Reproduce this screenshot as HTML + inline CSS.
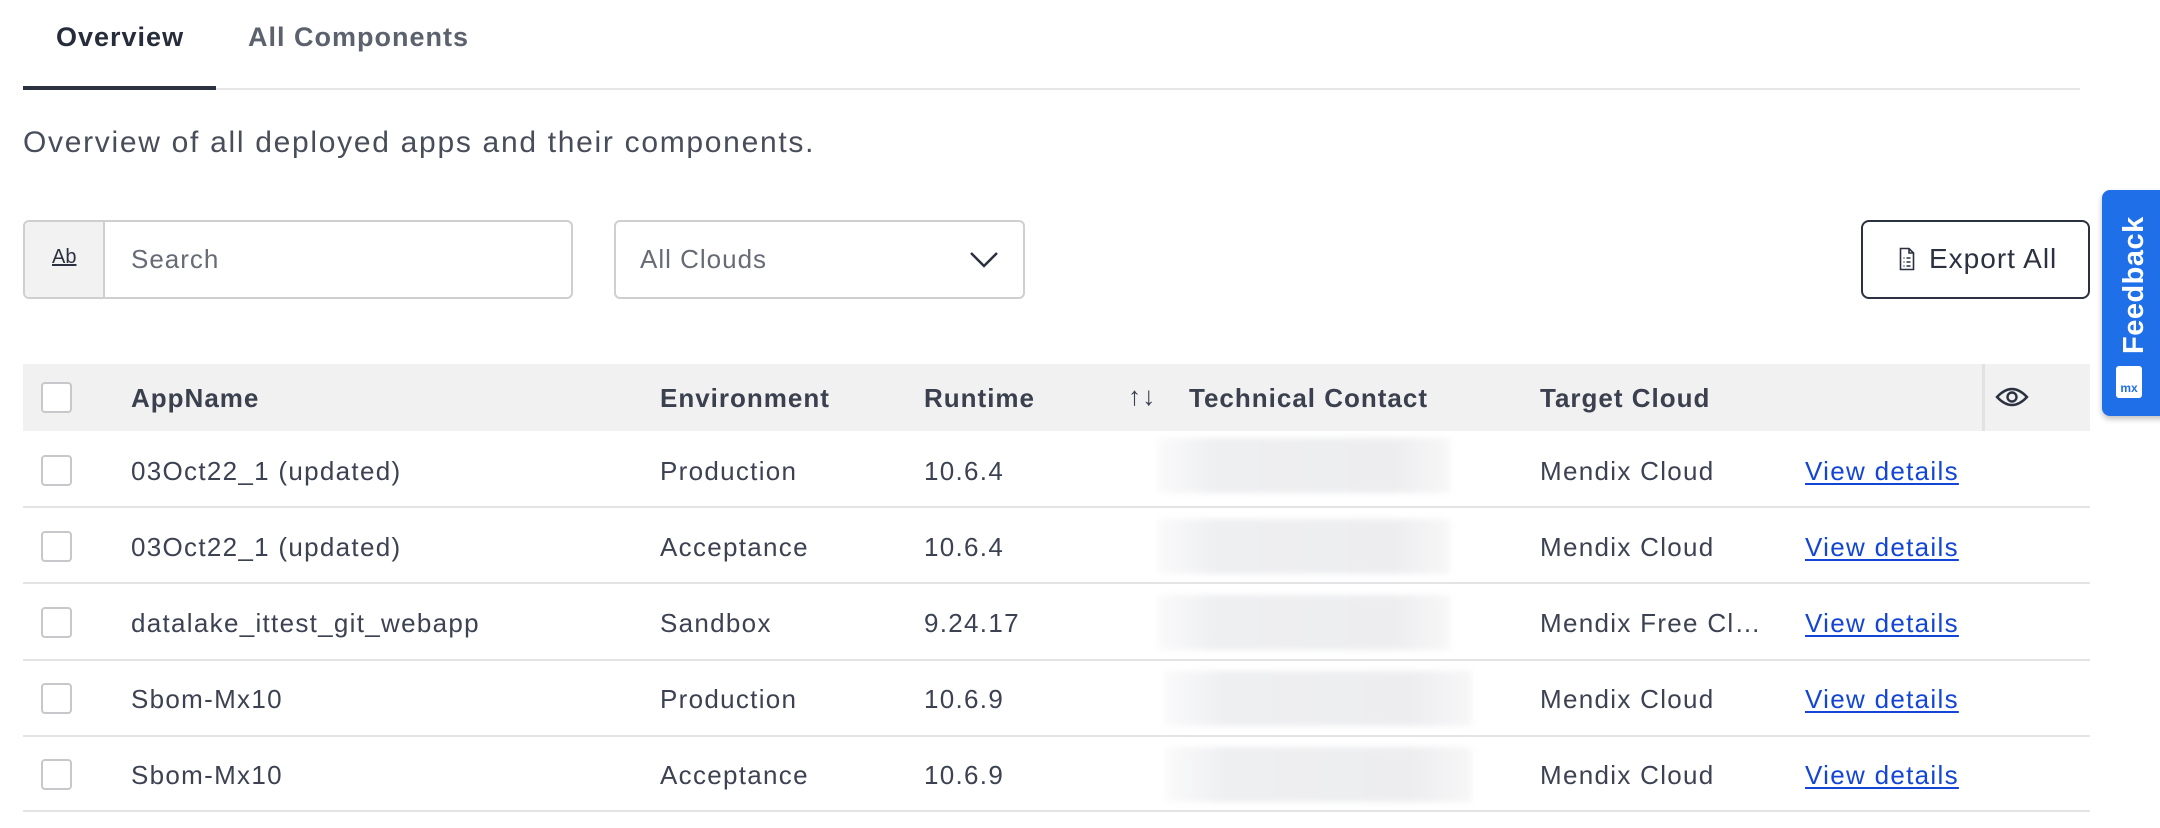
<!DOCTYPE html>
<html><head><meta charset="utf-8"><style>
*{box-sizing:border-box;margin:0;padding:0}
body{width:2160px;height:828px;background:#fff;font-family:"Liberation Sans",sans-serif;color:#3c4252;position:relative;overflow:hidden;letter-spacing:1px}
.a{position:absolute;white-space:nowrap}
.tab{font-size:27px;font-weight:bold;top:22px}
.cell{font-size:26px;line-height:30px;letter-spacing:1.3px}
.hd{font-weight:bold;color:#3a404e;letter-spacing:1px}
.cb{position:absolute;left:41px;width:31px;height:31px;border:2px solid #c8c8cc;border-radius:4px;background:#fff}
.line{position:absolute;left:23px;width:2067px;height:2px;background:#e4e4e6}
.blur{position:absolute;height:55px;background:linear-gradient(90deg,#fafafb,#eeeff1 20%,#ededef 80%,#f7f7f8);filter:blur(3px)}
.lnk{color:#1346d6;text-decoration:underline;text-underline-offset:3px}
</style></head><body>
<div class="a tab" style="left:56px;color:#262c3a">Overview</div>
<div class="a tab" style="left:248px;color:#5b616d">All Components</div>
<div class="a" style="left:23px;top:88px;width:2057px;height:2px;background:#e6e6e8"></div>
<div class="a" style="left:23px;top:86px;width:193px;height:4px;background:#2b3140"></div>
<div class="a" style="left:23px;top:126px;font-size:30px;letter-spacing:1.7px;color:#474d59">Overview of all deployed apps and their components.</div>

<div class="a" style="left:23px;top:220px;width:550px;height:79px;border:2px solid #cfcfd2;border-radius:6px;overflow:hidden">
 <div class="a" style="left:0;top:0;width:80px;height:75px;background:#f2f2f3;border-right:2px solid #cfcfd2"></div>
 <div class="a" style="left:27px;top:24px;font-size:20px;color:#2b3140;text-decoration:underline;letter-spacing:0">Ab</div>
 <div class="a" style="left:106px;top:22px;font-size:26px;color:#666b75">Search</div>
</div>
<div class="a" style="left:614px;top:220px;width:411px;height:79px;border:2px solid #cfcfd2;border-radius:6px">
 <div class="a" style="left:24px;top:22px;font-size:26px;color:#666b75">All Clouds</div>
 <svg class="a" style="left:352px;top:26px" width="32" height="24" viewBox="0 0 32 24"><path d="M3 5 L16 18 L29 5" fill="none" stroke="#2b3140" stroke-width="2.5"/></svg>
</div>
<div class="a" style="left:1861px;top:220px;width:229px;height:79px;border:2px solid #2b3140;border-radius:8px">
 <svg class="a" style="left:36px;top:25px" width="16" height="24" viewBox="0 0 16 24"><path d="M1.5 1.5 H10 L14.5 6 V22.5 H1.5 Z M10 1.5 V6 H14.5 M4.5 11 H5.5 M7.5 11 H11.5 M4.5 15 H5.5 M7.5 15 H11.5 M4.5 19 H5.5 M7.5 19 H11.5" fill="none" stroke="#2b3140" stroke-width="1.6"/></svg>
 <div class="a" style="left:66px;top:21px;font-size:28px;color:#2b3140">Export All</div>
</div>
<div class="a" style="left:2102px;top:190px;width:70px;height:226px;background:#1f6fe9;border-radius:8px 0 0 8px;box-shadow:0 3px 6px rgba(0,0,0,.25)">
 <div class="a" style="left:10px;top:14px;width:44px;height:150px;writing-mode:vertical-rl;transform:rotate(180deg);font-size:29px;font-weight:bold;color:#fff;letter-spacing:0.5px;line-height:44px;text-align:left">Feedback</div>
 <div class="a" style="left:14px;top:176px;width:26px;height:32px;background:#fff;border-radius:3px;font-size:12px;font-weight:bold;color:#1f6fe9;text-align:center;line-height:44px;letter-spacing:0">mx</div>
</div>

<div class="a" style="left:23px;top:364px;width:2067px;height:67px;background:#f1f1f2"></div>
<div class="a" style="left:1982px;top:364px;width:3px;height:67px;background:#e2e2e4"></div>
<div class="cb" style="top:382px"></div>
<div class="a cell hd" style="left:131px;top:383px">AppName</div>
<div class="a cell hd" style="left:660px;top:383px">Environment</div>
<div class="a cell hd" style="left:924px;top:383px">Runtime</div>
<div class="a cell" style="left:1128px;top:381px;color:#3a404e">↑↓</div>
<div class="a cell hd" style="left:1189px;top:383px">Technical Contact</div>
<div class="a cell hd" style="left:1540px;top:383px">Target Cloud</div>
<svg class="a" style="left:1995px;top:385px" width="34" height="24" viewBox="0 0 34 24"><path d="M2 12 Q17 -4 32 12 Q17 28 2 12 Z" fill="none" stroke="#2b3140" stroke-width="2.4"/><circle cx="17" cy="12" r="4.5" fill="none" stroke="#2b3140" stroke-width="2.4"/></svg>

<div class="cb" style="top:455px"></div>
<div class="a cell" style="left:131px;top:456px">03Oct22_1 (updated)</div>
<div class="a cell" style="left:660px;top:456px">Production</div>
<div class="a cell" style="left:924px;top:456px">10.6.4</div>
<div class="blur" style="left:1158px;top:438px;width:292px"></div>
<div class="a cell" style="left:1540px;top:456px">Mendix Cloud</div>
<div class="a cell lnk" style="left:1805px;top:456px">View details</div>
<div class="line" style="top:506px"></div>

<div class="cb" style="top:531px"></div>
<div class="a cell" style="left:131px;top:532px">03Oct22_1 (updated)</div>
<div class="a cell" style="left:660px;top:532px">Acceptance</div>
<div class="a cell" style="left:924px;top:532px">10.6.4</div>
<div class="blur" style="left:1158px;top:519px;width:292px"></div>
<div class="a cell" style="left:1540px;top:532px">Mendix Cloud</div>
<div class="a cell lnk" style="left:1805px;top:532px">View details</div>
<div class="line" style="top:582px"></div>

<div class="cb" style="top:607px"></div>
<div class="a cell" style="left:131px;top:608px">datalake_ittest_git_webapp</div>
<div class="a cell" style="left:660px;top:608px">Sandbox</div>
<div class="a cell" style="left:924px;top:608px">9.24.17</div>
<div class="blur" style="left:1158px;top:595px;width:292px"></div>
<div class="a cell" style="left:1540px;top:608px">Mendix Free Cl…</div>
<div class="a cell lnk" style="left:1805px;top:608px">View details</div>
<div class="line" style="top:659px"></div>

<div class="cb" style="top:683px"></div>
<div class="a cell" style="left:131px;top:684px">Sbom-Mx10</div>
<div class="a cell" style="left:660px;top:684px">Production</div>
<div class="a cell" style="left:924px;top:684px">10.6.9</div>
<div class="blur" style="left:1164px;top:671px;width:308px"></div>
<div class="a cell" style="left:1540px;top:684px">Mendix Cloud</div>
<div class="a cell lnk" style="left:1805px;top:684px">View details</div>
<div class="line" style="top:735px"></div>

<div class="cb" style="top:759px"></div>
<div class="a cell" style="left:131px;top:760px">Sbom-Mx10</div>
<div class="a cell" style="left:660px;top:760px">Acceptance</div>
<div class="a cell" style="left:924px;top:760px">10.6.9</div>
<div class="blur" style="left:1166px;top:747px;width:306px"></div>
<div class="a cell" style="left:1540px;top:760px">Mendix Cloud</div>
<div class="a cell lnk" style="left:1805px;top:760px">View details</div>
<div class="line" style="top:810px"></div>
</body></html>
